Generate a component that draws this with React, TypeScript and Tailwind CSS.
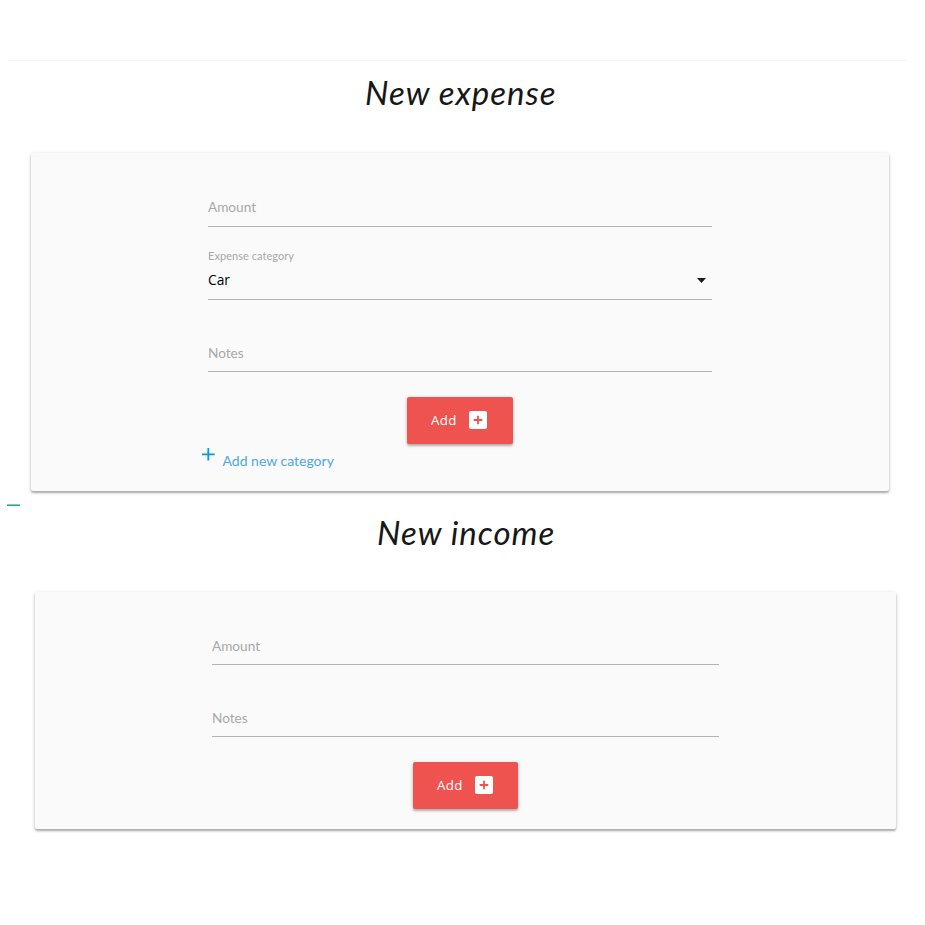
import React from "react";

const body = "font-['Lato','Open_Sans',sans-serif]";

function Title({ children, className }: { children: React.ReactNode; className: string }) {
  return (
    <h2 className={`font-['Lato','Open_Sans',sans-serif] italic text-[33px] leading-[40px] text-[#171717] whitespace-nowrap ${className}`}>
      {children}
    </h2>
  );
}

function Field({ label, className }: { label: string; className: string }) {
  return (
    <div className={`${body} flex items-center border-b border-[#b3b3b3] text-[13.6px] leading-5 text-[#a8a8a8] ${className}`}>
      <span>{label}</span>
    </div>
  );
}

function AddButton({ className }: { className: string }) {
  return (
    <button className={`flex h-[47px] items-center rounded-[2px] bg-[#ef5350] pl-6 font-['Open_Sans','Noto_Sans',sans-serif] text-[13.3px] tracking-[0.3px] text-white shadow-[0_2px_2px_rgba(0,0,0,0.2),0_1px_4px_rgba(0,0,0,0.18)] ${className}`}>
      <span className="w-[38px] pt-[1px] text-left">Add</span>
      <svg viewBox="0 0 18 18" className="-mt-[1px] h-[18px] w-[18px]">
        <rect width="18" height="18" rx="2" fill="#fff" />
        <path d="M9 4.7v8.6M4.7 9h8.6" stroke="#ef5350" strokeWidth="1.8" />
      </svg>
    </button>
  );
}

const cardShadow = "rounded-[2px] bg-[#fafafa] shadow-[0_2px_2px_rgba(0,0,0,0.26),0_1px_4px_rgba(0,0,0,0.16)]";

export default function App() {
  return (
    <main className="h-[925px] w-[925px] overflow-hidden bg-white">
      <div className="ml-2 h-[61px] w-[898px] border-b border-[#f3f3f3]" />
      <Title className="ml-[365px] mt-[11px] tracking-[1px]">New expense</Title>

      <section className={`ml-[31px] mt-[41px] flex h-[338px] w-[858px] flex-col px-[177px] pt-[35px] ${cardShadow}`}>
        <Field label="Amount" className="h-[39px] w-[504px]" />
        <div className={`${body} mt-[20px] h-[17px] text-[11px] leading-[17px] tracking-[0.05px] text-[#a8a8a8]`}>Expense category</div>
        <div className="flex h-[36px] w-[504px] items-center justify-between border-b border-[#b3b3b3] pb-[3px] pr-[6px] font-['Open_Sans','Noto_Sans',sans-serif] text-[13.8px] text-black">
          <span>Car</span>
          <svg viewBox="0 0 9 5" className="h-[5px] w-[9px]"><path d="M0 0h9L4.5 5z" fill="#1c1c1c" /></svg>
        </div>
        <Field label="Notes" className="mt-[34px] h-[38px] w-[504px]" />
        <AddButton className="ml-[199px] mt-[25px] w-[106px]" />
        <a className={`${body} -ml-[6px] mt-[5px] flex w-fit text-[14px] leading-[24px] text-[#4fa7df]`}>
          <svg viewBox="0 0 13 13" className="-mt-[1px] mr-[7.5px] h-[13px] w-[13px]"><path d="M6.3 0v12.5M0 6.3h12.6" stroke="#039be5" strokeWidth="1.8" /></svg>
          <span>Add new category</span>
        </a>
      </section>

      <div className="ml-[7px] mt-[13px] h-[2px] w-[13px] border-b border-[#26a69a] bg-[#80cbc4]" />
      <Title className="ml-[377px] mt-[6px] tracking-[1px]">New income</Title>

      <section className={`ml-[35px] mt-[40px] flex h-[237px] w-[860.5px] flex-col px-[177px] pt-[35px] ${cardShadow}`}>
        <Field label="Amount" className="h-[38px] w-[507px]" />
        <Field label="Notes" className="mt-[34px] h-[38px] w-[507px]" />
        <AddButton className="ml-[201px] mt-[25px] w-[105px]" />
      </section>
    </main>
  );
}
